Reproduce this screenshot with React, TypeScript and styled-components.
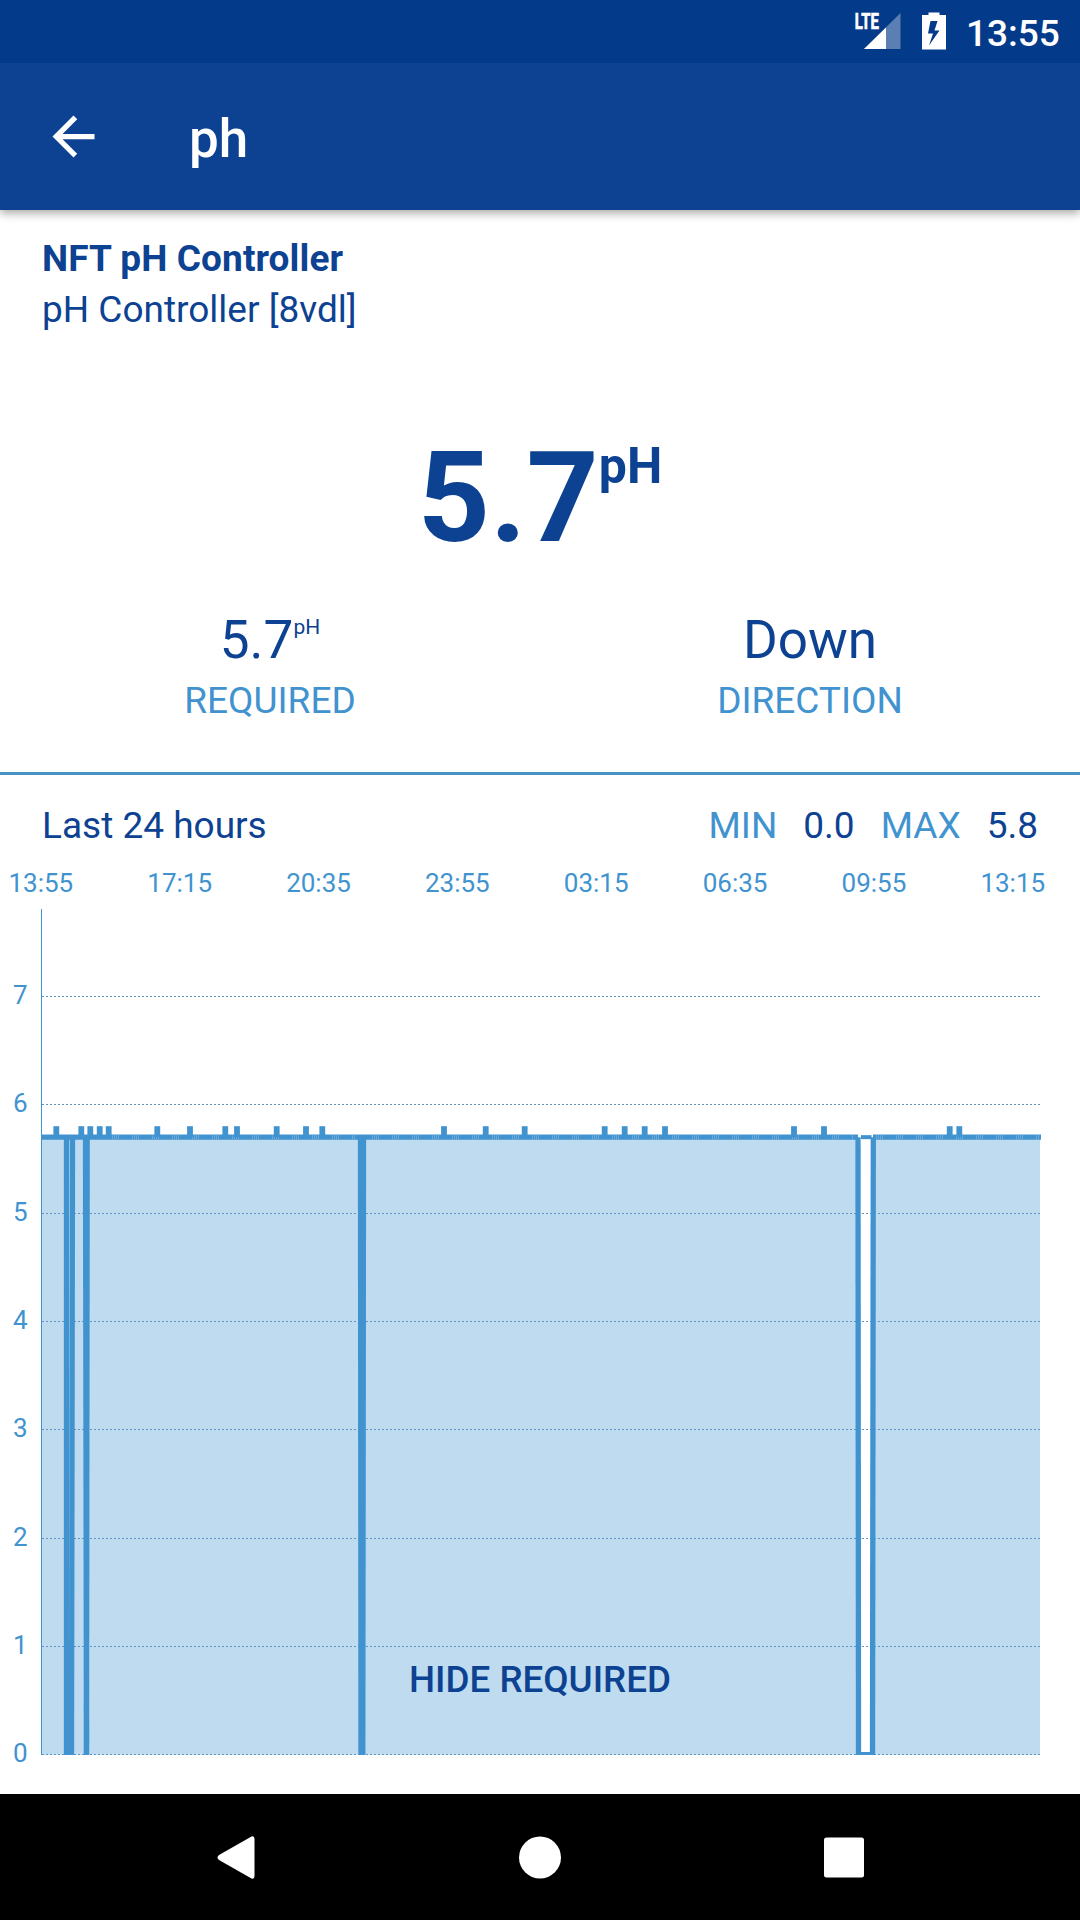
import React from "react";
import styled, { createGlobalStyle } from "styled-components";

const NAVY = "#0d4292";
const SKY = "#4193d0";

const GlobalStyle = createGlobalStyle`
  body { margin: 0; background: #fff; font-family: Roboto, "Noto Sans", sans-serif; }
`;

const Screen = styled.div`
  display: flex;
  flex-direction: column;
  width: 1080px;
  height: 1920px;
  overflow: hidden;
  background: #fff;
  color: ${NAVY};
  font-size: 37px;
`;

const StatusBar = styled.div`
  position: relative;
  z-index: 1;
  display: flex;
  flex: none;
  justify-content: flex-end;
  height: 63px;
  background: #043a8a;
  color: #fff;
`;

const StatusIcons = styled.svg`
  display: block;
  width: 116px;
  height: 63px;
`;

const Clock = styled.div`
  width: 114px;
  box-sizing: border-box;
  padding-right: 21px;
  text-align: right;
  font-weight: 500;
  line-height: 67px;
  white-space: nowrap;
`;

const Toolbar = styled.header`
  display: flex;
  flex: none;
  align-items: center;
  gap: 84px;
  height: 147px;
  padding-left: 42px;
  background: ${NAVY};
  color: #fff;
  box-shadow: 0 3px 9px rgba(0, 0, 0, 0.36);
`;

const BackIcon = styled.svg`
  display: block;
  width: 63px;
  height: 63px;
`;

const Title = styled.h1`
  margin: 0;
  padding-top: 4px;
  font-size: 53px;
  font-weight: 500;
  line-height: 62px;
`;

const DeviceInfo = styled.section`
  flex: none;
  height: 102px;
  padding: 23px 42px 100px;
  line-height: 51px;
`;

const DeviceLine = styled.div<{ $strong?: boolean }>`
  font-weight: ${(p) => (p.$strong ? 700 : 400)};
  letter-spacing: ${(p) => (p.$strong ? "0.1px" : "normal")};
`;

const Reading = styled.div`
  flex: none;
  height: 174px;
  text-align: center;
  font-size: 126px;
  font-weight: 700;
  line-height: 126px;
`;

const Unit = styled.span<{ $size: number; $rise: number }>`
  font-size: ${(p) => p.$size}px;
  line-height: 0;
  vertical-align: ${(p) => p.$rise}px;
`;

const Facts = styled.div`
  display: grid;
  flex: none;
  grid-template-columns: 1fr 1fr;
  height: 163px;
  border-bottom: 3px solid #4893c5;
  text-align: center;
`;

const FactValue = styled.div`
  height: 69px;
  font-size: 53px;
  line-height: 62px;
`;

const FactLabel = styled.div`
  color: ${SKY};
  line-height: 46px;
`;

const Summary = styled.div`
  display: flex;
  flex: none;
  align-items: center;
  height: 50px;
  padding: 26px 42px 7px;
  line-height: 50px;
`;

const Period = styled.div`
  flex: 1;
`;

const Stat = styled.div`
  display: flex;
  gap: 26px;
  margin-left: 26px;
`;

const StatName = styled.span`
  color: ${SKY};
`;

const ChartPanel = styled.div`
  position: relative;
  flex: 1;
`;

const ChartSvg = styled.svg`
  display: block;
  width: 1080px;
  height: 936px;
  font-size: 26px;
`;

const ToggleButton = styled.button`
  position: absolute;
  bottom: 91px;
  left: 50%;
  padding: 0;
  transform: translateX(-50%);
  border: 0;
  background: none;
  color: ${NAVY};
  font: 500 36.75px/46px Roboto, sans-serif;
  white-space: nowrap;
`;

const NavBar = styled.nav`
  display: flex;
  flex: none;
  align-items: center;
  justify-content: space-between;
  height: 126px;
  padding: 0 204px;
  background: #000;
`;

const NavIcon = styled.svg`
  display: block;
  width: 63px;
  height: 63px;
  fill: #fff;
`;

const TIMES = ["13:55", "17:15", "20:35", "23:55", "03:15", "06:35", "09:55", "13:15"];
const LEFT = 41.5;
const RIGHT = 1040;
const BASE = 1754.8;
const UNIT = 108.36;
const LEVEL = BASE - 5.7 * UNIT;

const SPIKES = [
  56.3, 81.3, 90.3, 99.7, 108.7, 157.3, 190, 225.3, 237, 276.7, 306, 322.3, 444, 485.7,
  524.7, 604.7, 624.7, 644.7, 665, 794, 824, 949.7, 959.3,
];

// Each drop is a pair of strokes: x at the reading level, x at zero.
const DROPS: [number, number][] = [
  [66.5, 66.5],
  [72.5, 71.5],
  [85.5, 86.5],
  [87.2, 86.5],
  [360.5, 361],
  [363.5, 362.8],
  [858, 858.5],
  [873.3, 872.5],
];

function Chart() {
  return (
    <ChartSvg viewBox="0 858 1080 936">
      {TIMES.map((t, i) => (
        <text key={t} x={40.8 + i * 138.85} y={892} fill={SKY} textAnchor="middle">
          {t}
        </text>
      ))}
      {[0, 1, 2, 3, 4, 5, 6, 7].map((v) => (
        <text key={v} x={27.5} y={BASE - v * UNIT + 7.5} fill={SKY} textAnchor="end">
          {v}
        </text>
      ))}
      <path
        fill="#bedbef"
        d={`M${LEFT} ${LEVEL}H858L858.5 ${BASE}H872.5L873.3 ${LEVEL}H${RIGHT}V${BASE}H${LEFT}Z`}
      />
      {[0, 1, 2, 3, 4, 5, 6, 7].map((v) => {
        const y = Math.floor(BASE - v * UNIT) + 0.5;
        return (
          <line key={v} x1={42} x2={RIGHT} y1={y} y2={y} stroke="#5f95c3" strokeDasharray="2 2" />
        );
      })}
      <line x1={41.5} x2={41.5} y1={909} y2={1755} stroke={SKY} />
      <g stroke={SKY} strokeWidth={5.3}>
        <path d={`M${LEFT} ${LEVEL}H858M873 ${LEVEL}H1041`} />
        <path strokeWidth={4} d={`M861 ${LEVEL}H871.5`} />
        {DROPS.map(([top, bottom]) => (
          <line key={top} x1={top} y1={LEVEL} x2={bottom} y2={1755} />
        ))}
        <path strokeWidth={3} d="M856 1753.5H875" />
      </g>
      <path
        d={`M112 ${LEVEL}H356M372 ${LEVEL}H853M876 ${LEVEL}H1040`}
        stroke="#8cc0e6"
        strokeOpacity={0.55}
        strokeWidth={4}
        strokeDasharray="1 1 1 1 1 1 1 13"
      />
      {SPIKES.map((x) => (
        <rect key={x} x={x - 2.9} y={1126.2} width={5.8} height={11} fill={SKY} />
      ))}
    </ChartSvg>
  );
}

export default function App() {
  return (
    <Screen>
      <GlobalStyle />
      <StatusBar>
        <StatusIcons viewBox="850 0 116 63">
          <path d="M900.5 13V49H864Z" fill="#fff" fillOpacity=".35" />
          <path d="M886 27.5V49H864Z" fill="#fff" />
          <text
            x="854.8"
            y="29"
            fill="#fff"
            stroke="#fff"
            strokeWidth="0.7"
            fontSize="21.5"
            fontWeight="700"
            textLength="24"
            lengthAdjust="spacingAndGlyphs"
          >
            LTE
          </text>
          <path
            fill="#fff"
            fillRule="evenodd"
            d="M922 15H928.5V12.5H939.5V15H946V49.5H922ZM930.5 21L928 33.5H933L929 45.5L939.5 30.5H934.5L937.5 21Z"
          />
        </StatusIcons>
        <Clock>13:55</Clock>
      </StatusBar>
      <Toolbar>
        <BackIcon viewBox="0 0 24 24">
          <path fill="#fff" d="M20 11H7.83l5.59-5.59L12 4l-8 8 8 8 1.41-1.41L7.83 13H20v-2z" />
        </BackIcon>
        <Title>ph</Title>
      </Toolbar>
      <DeviceInfo>
        <DeviceLine $strong>NFT pH Controller</DeviceLine>
        <DeviceLine>pH Controller [8vdl]</DeviceLine>
      </DeviceInfo>
      <Reading>
        5.7
        <Unit $size={50} $rise={58}>pH</Unit>
      </Reading>
      <Facts>
        <div>
          <FactValue>
            5.7
            <Unit $size={21} $rise={24}>pH</Unit>
          </FactValue>
          <FactLabel>REQUIRED</FactLabel>
        </div>
        <div>
          <FactValue>Down</FactValue>
          <FactLabel>DIRECTION</FactLabel>
        </div>
      </Facts>
      <Summary>
        <Period>Last 24 hours</Period>
        <Stat>
          <StatName>MIN</StatName>
          <span>0.0</span>
        </Stat>
        <Stat>
          <StatName>MAX</StatName>
          <span>5.8</span>
        </Stat>
      </Summary>
      <ChartPanel>
        <Chart />
        <ToggleButton>HIDE REQUIRED</ToggleButton>
      </ChartPanel>
      <NavBar>
        <NavIcon viewBox="0 0 63 63">
          <path d="M47.5 10.5Q50.5 9.5 50.5 13V50Q50.5 53.5 47.5 52.5L15 34Q12 31.5 15 29Z" />
        </NavIcon>
        <NavIcon viewBox="0 0 63 63">
          <circle cx="31" cy="31.5" r="21" />
        </NavIcon>
        <NavIcon viewBox="0 0 63 63">
          <rect x="11" y="11.5" width="40" height="40" rx="2.5" />
        </NavIcon>
      </NavBar>
    </Screen>
  );
}
